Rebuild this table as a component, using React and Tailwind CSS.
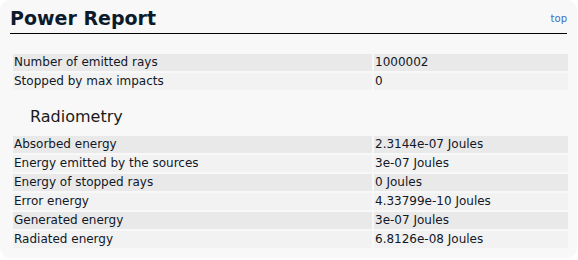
const general = [
    ['Number of emitted rays', '1000002'],
    ['Stopped by max impacts', '0'],
]

const radiometry = [
    ['Absorbed energy', '2.3144e-07 Joules'],
    ['Energy emitted by the sources', '3e-07 Joules'],
    ['Energy of stopped rays', '0 Joules'],
    ['Error energy', '4.33799e-10 Joules'],
    ['Generated energy', '3e-07 Joules'],
    ['Radiated energy', '6.8126e-08 Joules'],
]

const ReportTable = ({ rows }) => (
    <table className="ml-px w-[559px] border-separate border-spacing-[2px] table-fixed">
        <colgroup>
            <col className="w-[359px]" />
            <col />
        </colgroup>
        <tbody>
            {rows.map(([label, value], i) => (
                <tr key={label} className={i % 2 === 0 ? 'bg-[#e9e9e9]' : 'bg-[#f2f2f2]'}>
                    <td className="h-[17px] p-0 pl-px leading-[17px]">{label}</td>
                    <td className="h-[17px] p-0 pl-px leading-[17px]">{value}</td>
                </tr>
            ))}
        </tbody>
    </table>
)

export default function App() {
    return (
        <div className="w-[578px] h-[260px] bg-white font-['DejaVu_Sans',Verdana,sans-serif] text-[12px] text-[#111827]">
            <div className="h-[258px] w-[577px] rounded-[10px] bg-[#f8f8f8] px-[10px] pt-[7px]">
                <div className="flex items-start justify-between border-b border-black pb-[3px]">
                    <h1 className="text-[19px] font-bold leading-[23px] text-[#0b1b2b]">Power Report</h1>
                    <a href="#top" className="mt-[4px] text-[10px] text-[#3b6fc4]">top</a>
                </div>
                <div className="mt-[18px]">
                    <ReportTable rows={general} />
                </div>
                <h2 className="ml-[20px] mt-[15px] mb-[7px] text-[16px] leading-[20px] text-[#1a1a1a]">Radiometry</h2>
                <ReportTable rows={radiometry} />
            </div>
        </div>
    )
}
